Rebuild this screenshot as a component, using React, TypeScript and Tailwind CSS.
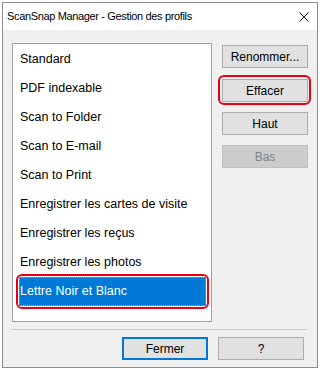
import type { ReactNode } from "react";

const profiles = [
  "Standard",
  "PDF indexable",
  "Scan to Folder",
  "Scan to E-mail",
  "Scan to Print",
  "Enregistrer les cartes de visite",
  "Enregistrer les reçus",
  "Enregistrer les photos",
  "Lettre Noir et Blanc",
];

const font = { fontFamily: '"Liberation Sans", Arial, sans-serif' };

function Btn({
  children,
  disabled,
  primary,
}: {
  children: ReactNode;
  disabled?: boolean;
  primary?: boolean;
}) {
  return (
    <button
      disabled={disabled}
      className={`flex h-[23px] w-[86px] items-center justify-center text-[12px] leading-none ${
        disabled
          ? "border border-[#bfbfbf] bg-[#cccccc] text-[#838383]"
          : primary
          ? "border-2 border-[#0078d7] bg-[#e1e1e1] text-black"
          : "border border-[#adadad] bg-[#e1e1e1] text-black"
      }`}
    >
      {children}
    </button>
  );
}

export default function App() {
  const selected = profiles.length - 1;

  return (
    <div className="h-[372px] w-[322px] bg-white pl-[2px] pt-[2px]" style={font}>
      <div className="flex h-[366px] w-[316px] flex-col border border-[#8c8c8c] bg-[#f0f0f0]">
        {/* title bar */}
        <div className="flex h-[27px] shrink-0 items-center justify-between bg-white pl-[4px] pr-[8px]">
          <span className="text-[11px] tracking-[-0.35px] text-black">
            ScanSnap Manager - Gestion des profils
          </span>
          <svg width="10" height="10" viewBox="0 0 10 10" className="text-[#1a1a1a]">
            <path d="M0.5 0.5 L9.5 9.5 M9.5 0.5 L0.5 9.5" stroke="currentColor" strokeWidth="1" />
          </svg>
        </div>

        {/* body */}
        <div className="flex flex-1 flex-col pl-[9px] pt-[13px]">
          <div className="flex">
            {/* profile list */}
            <div className="h-[279px] w-[200px] border border-[#a0a0a0] bg-white pl-[6px] pr-[5px] pt-[1px]">
              {profiles.map((p, i) =>
                i === selected ? (
                  <div key={p} className="relative h-[29px]">
                    <div className="flex h-full items-center border border-dotted border-[#6fb0e6] bg-[#0078d7] text-[12.5px] text-white">
                      {p}
                    </div>
                    <div className="pointer-events-none absolute -inset-[3px] rounded-[6px] border-2 border-[#e60012]" />
                  </div>
                ) : (
                  <div key={p} className="flex h-[29px] items-center pl-[1px] text-[12.5px] text-black">
                    {p}
                  </div>
                )
              )}
            </div>

            {/* side actions */}
            <div className="ml-[10px] mt-[2px] flex flex-col gap-[10px]">
              <Btn>Renommer...</Btn>
              <div className="relative mt-[1px]">
                <Btn>Effacer</Btn>
                <div className="pointer-events-none absolute -bottom-[3px] -left-[4px] -right-[3px] -top-[4px] rounded-[6px] border-2 border-[#e60012]" />
              </div>
              <Btn>Haut</Btn>
              <Btn disabled>Bas</Btn>
            </div>
          </div>

          <div className="mt-[7px] w-[295px] border-t border-[#c8c8c8]" />

          <div className="mt-[7px] flex justify-end gap-[10px] pr-[13px]">
            <Btn primary>Fermer</Btn>
            <Btn>?</Btn>
          </div>
        </div>
      </div>
    </div>
  );
}
